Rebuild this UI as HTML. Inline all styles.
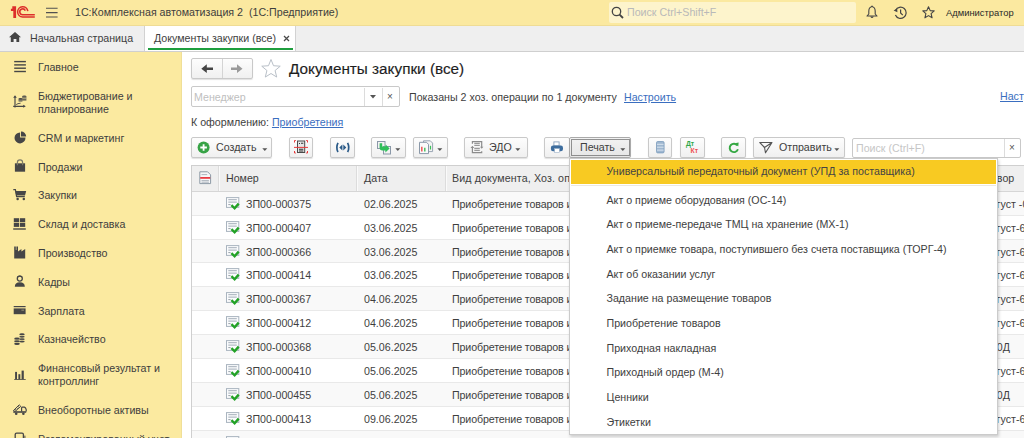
<!DOCTYPE html><html><head><meta charset="utf-8"><style>
*{box-sizing:border-box;margin:0;padding:0}
html,body{width:1024px;height:438px;overflow:hidden;background:#fff}
body{font-family:"Liberation Sans",sans-serif;font-size:10.67px;color:#3e3e3e;position:relative}
.a{position:absolute;white-space:nowrap}
.t{position:absolute;white-space:nowrap;line-height:13px}
#top{left:0;top:0;width:1024px;height:26px;background:#fbe9a0;border-bottom:1px solid #efdc95}
#tabs{left:0;top:26px;width:1024px;height:26px;background:#efefef;border-bottom:1px solid #cfcfcf}
#side{left:0;top:52px;width:182px;height:386px;background:#fbeaa0;border-right:1px solid #f0df98}
#sideb{left:181px;top:52px;width:0px;height:386px;background:#e4e4e4}
.btn{position:absolute;height:21px;border:1px solid #c9c9c9;border-radius:2px;background:linear-gradient(#fdfdfd,#f0f0f0);box-shadow:0 1px 1px rgba(0,0,0,.12)}
.lnk{color:#3a6ec0;text-decoration:underline}
.hl{position:absolute;top:166px;height:25px;background:#f0f0f0;border-bottom:1px solid #dcdcdc}
.rl{position:absolute;left:192px;width:832px;height:1px;background:#e9e9e9}
svg{position:absolute;overflow:visible}
</style></head><body>
<div id="top" class="a"></div><div id="tabs" class="a"></div><div id="side" class="a"></div><div id="sideb" class="a"></div>
<svg style="left:0;top:0" width="40" height="25" viewBox="0 0 40 25">
<path d="M12.3 6.2 H16.1 V17.9 H13.3 V10.9 H10.9 V8.7 H12.3Z" fill="#dd2f2a"/>
<g fill="none" stroke="#dd2f2a" stroke-width="1.55">
<path d="M27.8 11.2 A5.1 5.1 0 1 0 22.6 16.95 H34.8"/>
<path d="M25.3 10.6 A2.9 2.9 0 1 0 22.9 14.7 H34.8"/>
</g></svg>
<svg style="left:46px;top:7px" width="12" height="11" viewBox="0 0 12 11"><g stroke="#505050" stroke-width="1.1"><path d="M0 1.3H11.6M0 5.6H11.6M0 10H11.6"/></g></svg>
<div class="t" style="left:75px;top:6px;color:#3e3e3e">1С:Комплексная автоматизация 2&nbsp; (1С:Предприятие)</div>
<div class="a" style="left:609px;top:2px;width:247px;height:21px;background:#fdf4cc;border-radius:2px"></div>
<svg style="left:611px;top:6px" width="13" height="13" viewBox="0 0 13 13"><circle cx="5.5" cy="5.5" r="4.2" fill="none" stroke="#444" stroke-width="1.3"/><path d="M8.6 8.6 L12 12" stroke="#444" stroke-width="1.8"/></svg>
<div class="t" style="left:627px;top:6px;color:#b9b9b9">Поиск Ctrl+Shift+F</div>
<svg style="left:866px;top:5px" width="12" height="14" viewBox="0 0 12 14"><path d="M6 1 L6.6 1.8 C8.6 2.4 9.2 4.2 9.2 6.4 V9 L11 11 H1 L2.8 9 V6.4 C2.8 4.2 3.4 2.4 5.4 1.8Z" fill="none" stroke="#444" stroke-width="1.1" stroke-linejoin="round"/><path d="M4.2 11.4 Q6 14.8 7.8 11.4Z" fill="#444"/></svg>
<svg style="left:893px;top:6px" width="15" height="14" viewBox="0 0 15 14"><path d="M2.6 4.2 A5.6 5.6 0 1 1 2.4 9" fill="none" stroke="#444" stroke-width="1.2"/><path d="M0.6 4.6 L4.2 2.6 L4.4 6.2Z" fill="#444"/><path d="M7.6 3.4 V6.9 L9.8 9.1" fill="none" stroke="#444" stroke-width="1.2"/></svg>
<svg style="left:922px;top:6px" width="13" height="13" viewBox="0 0 13 13"><path d="M6.5 0.8 L8.2 4.6 L12.2 4.9 L9.1 7.6 L10.1 11.8 L6.5 9.6 L2.9 11.8 L3.9 7.6 L0.8 4.9 L4.8 4.6Z" fill="none" stroke="#444" stroke-width="1.1" stroke-linejoin="round"/></svg>
<div class="t" style="left:946px;top:6px;font-size:9.4px;color:#2a2a2a">Администратор</div>
<svg style="left:9px;top:32px" width="12" height="10" viewBox="0 0 12 10"><path d="M6 0 L12 5.2 H10.2 V10 H7.4 V7 H4.6 V10 H1.8 V5.2 H0Z" fill="#444"/></svg>
<div class="t" style="left:30px;top:32px;color:#3e3e3e">Начальная страница</div>
<div class="a" style="left:144px;top:26px;width:1px;height:25px;background:#d2d2d2"></div>
<div class="a" style="left:145px;top:26px;width:151px;height:25px;background:#fff;border-right:1px solid #d2d2d2"></div>
<div class="a" style="left:148px;top:48px;width:145px;height:2px;background:#1e9e3e"></div>
<div class="t" style="left:154px;top:32px;color:#3e3e3e">Документы закупки (все)</div>
<svg style="left:283px;top:35px" width="7" height="7" viewBox="0 0 7 7"><path d="M1 1L6 6M6 1L1 6" stroke="#4a4a4a" stroke-width="1.25"/></svg>
<div class="t" style="left:38px;top:61.3px;color:#3e3e3e">Главное</div>
<div class="t" style="left:38px;top:90px;color:#3e3e3e">Бюджетирование и<br>планирование</div>
<div class="t" style="left:38px;top:131.5px;color:#3e3e3e">CRM и маркетинг</div>
<div class="t" style="left:38px;top:160.6px;color:#3e3e3e">Продажи</div>
<div class="t" style="left:38px;top:189.4px;color:#3e3e3e">Закупки</div>
<div class="t" style="left:38px;top:218.2px;color:#3e3e3e">Склад и доставка</div>
<div class="t" style="left:38px;top:247px;color:#3e3e3e">Производство</div>
<div class="t" style="left:38px;top:275.8px;color:#3e3e3e">Кадры</div>
<div class="t" style="left:38px;top:304.6px;color:#3e3e3e">Зарплата</div>
<div class="t" style="left:38px;top:333.4px;color:#3e3e3e">Казначейство</div>
<div class="t" style="left:38px;top:362.2px;color:#3e3e3e">Финансовый результат и<br>контроллинг</div>
<div class="t" style="left:38px;top:404px;color:#3e3e3e">Внеоборотные активы</div>
<div class="t" style="left:38px;top:432.8px;color:#3e3e3e">Регламентированный учет</div>
<svg style="left:0;top:0" width="40" height="438" viewBox="0 0 40 438">
<g fill="#464646" stroke="none">
<!-- main -->
<rect x="14.2" y="60.9" width="11.7" height="1.4"/><rect x="14.2" y="64.2" width="11.7" height="1.4"/><rect x="14.2" y="67.5" width="11.7" height="1.4"/><rect x="14.2" y="70.8" width="11.7" height="1.4"/>
<!-- budget -->
<path d="M15 96.8V107.6M13.2 106.3H24.4" stroke="#464646" stroke-width="1.15" fill="none"/>
<path d="M13.2 97.8 L15 95.3 L16.8 97.8Z M23.2 104.8 L25.8 106.3 L23.2 107.8Z"/>
<path d="M16.2 104.6 Q17.6 103.4 20.6 103.2" stroke="#464646" stroke-width="0.9" fill="none"/>
<ellipse cx="24.3" cy="96.3" rx="2.1" ry="0.9"/>
<rect x="22.2" y="96.3" width="4.2" height="4.3" fill="#6a6858"/>
<path d="M22.2 98.2H26.4" stroke="#f2e4a0" stroke-width="0.6"/>
<ellipse cx="20.5" cy="98.7" rx="1.9" ry="0.8"/>
<rect x="18.6" y="98.7" width="3.8" height="2.8"/>
<path d="M18.6 100.2H22.4" stroke="#c8bf90" stroke-width="0.6"/>
<!-- crm -->
<path d="M20.1 132.4 V137.6 H25.5 A5.5 5.5 0 1 1 20.1 132.4Z"/>
<path d="M21 131.6 A5 5 0 0 1 26.2 136.6 H21Z"/>
<!-- sales bag -->
<rect x="14.9" y="163.3" width="10.2" height="8.4"/>
<path d="M17.4 165.2 V162.4 A2.6 2.6 0 0 1 22.6 162.4 V165.2" stroke="#7c7a68" stroke-width="1.2" fill="none"/>
<!-- purchases cart -->
<path d="M13.3 189.6 H15.4 L16.6 196.6 H24.8" stroke="#464646" stroke-width="1.2" fill="none"/>
<path d="M15.2 191 H26.2 L25 195.6 H16.2Z"/>
<circle cx="17.6" cy="198.9" r="1.25"/><circle cx="23.8" cy="198.9" r="1.25"/>
<!-- warehouse -->
<rect x="13.8" y="218.2" width="5.3" height="4"/><rect x="19.9" y="218.2" width="5.3" height="4"/>
<rect x="13.8" y="222.9" width="5.3" height="4"/><rect x="19.9" y="222.9" width="5.3" height="4"/>
<rect x="13.2" y="228.3" width="12.6" height="1.4"/>
<!-- production -->
<path d="M14.2 258.4 V246.6 H15.8 V250 H16.4 V246.6 H18 V251.6 L21.4 248.9 V251.6 L25.2 248.9 V258.4Z"/>
<!-- hr -->
<circle cx="19.8" cy="278.6" r="2.5" fill="none" stroke="#464646" stroke-width="1.3"/>
<path d="M17.3 277.6 Q19.8 275.2 22.3 277.6 V276.4 Q19.8 274.6 17.3 276.4Z"/>
<path d="M14.8 286.8 Q14.8 282.3 19.8 282.3 Q24.8 282.3 24.8 286.8Z"/>
<!-- salary card -->
<rect x="13.7" y="306" width="11.9" height="1.2"/>
<rect x="13.7" y="308.4" width="11.9" height="5.8"/>
<rect x="21.4" y="309.6" width="2.6" height="1.2" fill="#8a8570"/>
<!-- treasury coins -->
<g>
<ellipse cx="17" cy="338.8" rx="2.8" ry="1.2"/><ellipse cx="17" cy="341.2" rx="2.8" ry="1.2"/><ellipse cx="17" cy="343.8" rx="2.8" ry="1.3"/>
<ellipse cx="22" cy="334.4" rx="2.7" ry="1.1"/><ellipse cx="22" cy="336.8" rx="2.7" ry="1.1"/><ellipse cx="22" cy="339.2" rx="2.7" ry="1.1"/><ellipse cx="22" cy="341.4" rx="2.7" ry="1"/>
</g>
<path d="M14.6 340 H19.4 M14.6 342.5 H19.4 M19.6 335.6 H24.6 M19.6 338 H24.6 M19.6 340.3 H24.6" stroke="#f5e59a" stroke-width="0.6"/>
<!-- finance bars -->
<rect x="15.1" y="371.9" width="1.9" height="7.4"/><rect x="18.4" y="374.2" width="1.9" height="5.1"/><rect x="21.6" y="370.6" width="2.2" height="8.7"/>
<rect x="14.2" y="379.1" width="11.5" height="0.8"/>
<!-- fixed assets truck -->
<path d="M13.4 410.6 L19.2 404.8 L20.8 406.4 L15 411.4Z" fill="none" stroke="#464646" stroke-width="1"/>
<path d="M15.2 409.2 L16.4 410.2 M16.6 407.8 L17.8 408.8 M18 406.4 L19.2 407.4" stroke="#464646" stroke-width="0.8"/>
<path d="M21.6 411.6 V407.9 Q21.6 407.2 22.4 407.2 H24.4 Q25.8 407.6 26.2 409.6 V411.6" fill="none" stroke="#464646" stroke-width="1.2"/>
<rect x="13.3" y="411.2" width="12.9" height="1.6"/>
<circle cx="16.2" cy="413.8" r="1.3"/><circle cx="23.4" cy="413.8" r="1.3"/>
<!-- reg -->
<path d="M15.2 438 V434.6 Q15.2 433.2 16.6 433.2 H22 Q23.4 433.2 23.4 434.6 V438" fill="none" stroke="#464646" stroke-width="1.3"/>
<rect x="24.4" y="435.6" width="1" height="3"/>
</g></svg>
<div class="btn" style="left:191px;top:58px;width:62px;height:21px"></div>
<div class="a" style="left:222px;top:59px;width:1px;height:19px;background:#d4d4d4"></div>
<svg style="left:191px;top:58px" width="62" height="21" viewBox="0 0 62 21"><path d="M10.3 10.7 L15.8 6.3 V9.4 H22 V12 H15.8 V15.1Z" fill="#444"/><path d="M51.5 10.7 L46 6.3 V9.4 H40 V12 H46 V15.1Z" fill="#9a9a9a"/></svg>
<svg style="left:261px;top:59px" width="21" height="19" viewBox="0 0 21 19"><path d="M10.00 0.50 L12.53 6.72 L19.23 7.20 L14.09 11.53 L15.70 18.05 L10.00 14.50 L4.30 18.05 L5.91 11.53 L0.77 7.20 L7.47 6.72Z" fill="none" stroke="#b9c0c8" stroke-width="1" stroke-linejoin="round"/></svg>
<div class="t" style="left:289px;top:60px;font-size:15.3px;line-height:18px;color:#1e1e1e;-webkit-text-stroke:0.15px #1e1e1e">Документы закупки (все)</div>
<div class="a" style="left:191px;top:86px;width:209px;height:21px;border:1px solid #c9c9c9;border-radius:2px;background:#fff"></div>
<div class="a" style="left:364px;top:88px;width:1px;height:18px;background:#dcdcdc"></div>
<div class="a" style="left:382px;top:88px;width:1px;height:18px;background:#dcdcdc"></div>
<div class="t" style="left:194px;top:91px;color:#c0c0c0">Менеджер</div>
<svg style="left:370px;top:95px" width="6" height="4" viewBox="0 0 6 4"><path d="M0 0H6L3 3.5Z" fill="#555"/></svg>
<div class="t" style="left:387px;top:90px;color:#555;font-size:10px">×</div>
<div class="t" style="left:409px;top:91px;color:#3e3e3e">Показаны 2 хоз. операции по 1 документу</div>
<div class="t lnk" style="left:624px;top:91px">Настроить</div>
<div class="t lnk" style="left:1000px;top:90px">Настроить</div>
<div class="t" style="left:191px;top:116px;color:#3e3e3e">К оформлению: <span class="lnk">Приобретения</span></div>
<div class="btn" style="left:191px;top:137px;width:81px;height:21px"></div>
<svg style="left:197px;top:141px" width="13" height="13" viewBox="0 0 13 13"><circle cx="6.6" cy="6.5" r="6" fill="#37a346"/><path d="M6.6 3.2V9.8M3.3 6.5H9.9" stroke="#fff" stroke-width="1.8"/></svg>
<div class="t" style="left:216px;top:141px">Создать</div>
<svg style="left:262px;top:147.5px" width="6" height="4" viewBox="0 0 6 4"><path d="M0.3 0.3H5.3L2.8 3Z" fill="#555"/></svg>
<div class="btn" style="left:289px;top:137px;width:24px;height:21px"></div>
<svg style="left:294px;top:140px" width="14" height="14" viewBox="0 0 14 14"><rect x="3.5" y="1" width="7.2" height="11.5" fill="#e6e6e6" stroke="#4a4a4a" stroke-width="1"/><path d="M5 3.5H6M7 3.3H9.3M5 9.2H9.3M5 11H9.3" stroke="#333" stroke-width="1.1"/><g fill="none" stroke="#e8383a" stroke-width="1"><path d="M0.5 2.5V0.5H1.8M12.2 0.5H13.5V2.5M13.5 11V13H12.2M1.8 13H0.5V11"/></g><path d="M0 7.4H14" stroke="#e8383a" stroke-width="1"/></svg>
<div class="btn" style="left:330px;top:137px;width:25px;height:21px"></div>
<svg style="left:335px;top:141px" width="16" height="13" viewBox="0 0 16 13"><g fill="none" stroke="#2a5a88" stroke-width="1.7"><path d="M3 1.8 Q0.6 6.4 3 11"/><path d="M12.6 1.8 Q15 6.4 12.6 11"/></g><path d="M4.3 6.4 L7.4 3.4 V9.4Z M11.3 6.4 L8.3 3.4 V9.4Z" fill="#2a5a88"/></svg>
<div class="btn" style="left:371px;top:137px;width:35px;height:21px"></div>
<svg style="left:376px;top:140px" width="16" height="16" viewBox="0 0 16 16"><rect x="1.5" y="1.5" width="7.5" height="7" fill="#f2f2f2" stroke="#8a98a8"/><rect x="7.5" y="6.5" width="7" height="7.5" fill="#f2f2f2" stroke="#8a98a8"/><path d="M3.6 3.2 H6.2 V6.6 L9.6 6.6 V4.6 L13.6 8.6 L9.4 12.6 V10.4 H6 Q3.6 10.4 3.6 8Z" fill="#2fbf5a"/></svg>
<svg style="left:395px;top:147.5px" width="6" height="4" viewBox="0 0 6 4"><path d="M0.3 0.3H5.3L2.8 3Z" fill="#555"/></svg>
<div class="btn" style="left:413px;top:137px;width:35px;height:21px"></div>
<svg style="left:418px;top:140px" width="16" height="16" viewBox="0 0 16 16"><path d="M5.5 0.8 H12.3 L14.6 3.1 V11.6 H5.5Z" fill="#f4f4f4" stroke="#9aa6b4"/><path d="M1.5 2.3 H8.5 L10.5 4.3 V13.6 H1.5Z" fill="#fafafa" stroke="#8a98a8"/><path d="M3.8 11.6V6.8" stroke="#ef6060" stroke-width="1.6"/><path d="M6.8 11.6V7.8" stroke="#3cbf58" stroke-width="1.4"/><path d="M12.5 9.5V5.8" stroke="#3cbf58" stroke-width="1.2"/></svg>
<svg style="left:437px;top:147.5px" width="6" height="4" viewBox="0 0 6 4"><path d="M0.3 0.3H5.3L2.8 3Z" fill="#555"/></svg>
<div class="btn" style="left:464px;top:137px;width:64px;height:21px"></div>
<svg style="left:466px;top:138px" width="20" height="18" viewBox="0 0 20 18"><g fill="none" stroke="#8c8c8c" stroke-width="1.2"><path d="M6.4 5.8 V3.7 H15.7 V9"/><path d="M6.4 9.6 V14.6 H15.7 V13.2"/><path d="M8.3 5.3H13.8M8.3 7.3H13.8M8.3 10.3H13.8M8.3 12.3H13.8" stroke="#9a9a9a"/></g><path d="M14 8.8 H17.4 L15.7 10.8Z M4.5 9.9 H8.3 L6.4 7.8Z" fill="#8c8c8c"/></svg>
<div class="t" style="left:489px;top:141px">ЭДО</div>
<svg style="left:515px;top:147.5px" width="6" height="4" viewBox="0 0 6 4"><path d="M0.3 0.3H5.3L2.8 3Z" fill="#555"/></svg>
<div class="btn" style="left:544px;top:137px;width:26px;height:21px"></div>
<svg style="left:550px;top:141px" width="14" height="12" viewBox="0 0 14 12"><rect x="3.9" y="0.9" width="5.2" height="4" fill="#fff" stroke="#8aa2bc" stroke-width="0.9"/><rect x="0.9" y="4.5" width="12.1" height="5.8" rx="2.2" fill="#3d6d9e"/><rect x="4.6" y="7.6" width="4.8" height="3.9" fill="#fff" stroke="#9ab0c6" stroke-width="0.6"/></svg>
<div class="btn" style="left:569px;top:137px;width:62px;height:21px;background:linear-gradient(#f2f2f2,#e6e6e6);border-color:#aaa"></div>
<svg style="left:571px;top:139px" width="59" height="17" viewBox="0 0 59 17"><rect x="0.5" y="0.5" width="58" height="16" fill="none" stroke="#333" stroke-width="1" stroke-dasharray="1 1"/></svg>
<div class="t" style="left:580px;top:141px">Печать</div>
<svg style="left:620px;top:147.5px" width="6" height="4" viewBox="0 0 6 4"><path d="M0.3 0.3H5.3L2.8 3Z" fill="#555"/></svg>
<div class="btn" style="left:648px;top:137px;width:24px;height:21px"></div>
<svg style="left:656px;top:141px" width="9" height="13" viewBox="0 0 9 13"><rect x="0.5" y="0.5" width="7.6" height="11.4" rx="1.2" fill="#9fb7d0" stroke="#7b9cbc" stroke-width="0.8"/><path d="M1 3.3H7.6M1 6.2H7.6M1 9.1H7.6" stroke="#dfe9f3" stroke-width="0.9"/></svg>
<div class="btn" style="left:680px;top:137px;width:25px;height:21px"></div>
<div class="a" style="left:686px;top:140px;font-size:6.8px;line-height:8px;font-weight:bold;color:#2ea84a">Дт</div>
<div class="a" style="left:690.5px;top:146.5px;font-size:6.8px;line-height:8px;font-weight:bold;color:#ee4e50">Кт</div>
<div class="btn" style="left:721px;top:137px;width:25px;height:21px"></div>
<svg style="left:728px;top:142px" width="12" height="12" viewBox="0 0 12 12"><path d="M9.4 3.6 A4.2 4.2 0 1 0 9.9 7.2" fill="none" stroke="#35a843" stroke-width="1.9"/><path d="M6.9 1.2 L10.6 0.6 L10.3 4.6Z" fill="#35a843"/></svg>
<div class="btn" style="left:753px;top:137px;width:92px;height:21px"></div>
<svg style="left:759px;top:141px" width="14" height="13" viewBox="0 0 14 13"><path d="M0.8 1.5 L13 1.5 L6.5 11.8 L5.5 6.5Z M5.5 6.5 L13 1.5" fill="none" stroke="#555" stroke-width="1.1" stroke-linejoin="round"/></svg>
<div class="t" style="left:779px;top:141px">Отправить</div>
<svg style="left:834px;top:147.5px" width="6" height="4" viewBox="0 0 6 4"><path d="M0.3 0.3H5.3L2.8 3Z" fill="#555"/></svg>
<div class="a" style="left:852px;top:138px;width:169px;height:20px;border:1px solid #c9c9c9;border-radius:2px;background:#fff"></div>
<div class="a" style="left:1004px;top:139px;width:1px;height:18px;background:#dcdcdc"></div>
<div class="t" style="left:856px;top:142px;color:#c6c6c6">Поиск (Ctrl+F)</div>
<div class="t" style="left:1009px;top:141px;color:#555;font-size:10px">×</div>
<div class="a" style="left:191px;top:165px;width:833px;height:290px;border:1px solid #cfcfcf;border-right:none;background:#fff"></div>
<div class="a" style="left:192px;top:166px;width:832px;height:26px;background:#efefef;border-bottom:1px solid #d6d6d6"></div>
<div class="a" style="left:218px;top:166px;width:1px;height:25px;background:#dcdcdc"></div><div class="a" style="left:219px;top:166px;width:1px;height:25px;background:#fafafa"></div>
<div class="a" style="left:356px;top:166px;width:1px;height:25px;background:#dcdcdc"></div><div class="a" style="left:357px;top:166px;width:1px;height:25px;background:#fafafa"></div>
<div class="a" style="left:445px;top:166px;width:1px;height:25px;background:#dcdcdc"></div><div class="a" style="left:446px;top:166px;width:1px;height:25px;background:#fafafa"></div>
<svg style="left:199px;top:171px" width="13" height="14" viewBox="0 0 13 14"><path d="M0.8 0.8H8.6L11.6 3.8V12.6H0.8Z" fill="#f6f7f8" stroke="#8d9aa6"/><path d="M2.5 3.6H8.2M2.5 9.6H9.9M2.5 11.2H9.9" stroke="#a5aeb8" stroke-width="0.9"/><path d="M1.2 6.9H11.2" stroke="#e8323a" stroke-width="1.7"/></svg>
<div class="t" style="left:226px;top:172px">Номер</div>
<div class="t" style="left:364px;top:172px">Дата</div>
<div class="t" style="left:452px;top:172px;letter-spacing:0.12px">Вид документа, Хоз. операция</div>
<div class="t" style="left:974px;top:172px">Договор</div>
<div class="a" style="left:192px;top:192px;width:832px;height:23px;background:#f9f9f9"></div>
<div class="rl" style="top:215px"></div>
<svg style="left:226px;top:197px" width="15" height="14" viewBox="0 0 15 14"><rect x="0.5" y="0.6" width="12.3" height="9.8" fill="#fbfcfd" stroke="#a9b4bf"/><path d="M2.3 2.6H10.8M2.3 5.1H10.8" stroke="#b4bcc5" stroke-width="1.1"/><path d="M2.3 7.6H4.6" stroke="#8c96a0" stroke-width="0.9"/><path d="M5.4 8.2 L8.6 11.3 L12.7 6.6" fill="none" stroke="#22a226" stroke-width="2.4"/></svg>
<div class="t" style="left:246px;top:198px">ЗП00-000375</div>
<div class="t" style="left:364px;top:198px">02.06.2025</div>
<div class="t" style="left:452px;top:198px;letter-spacing:-0.13px">Приобретение товаров и услуг</div>
<div class="t" style="left:985px;top:198px">август -0</div>
<div class="rl" style="top:239px"></div>
<svg style="left:226px;top:221px" width="15" height="14" viewBox="0 0 15 14"><rect x="0.5" y="0.6" width="12.3" height="9.8" fill="#fbfcfd" stroke="#a9b4bf"/><path d="M2.3 2.6H10.8M2.3 5.1H10.8" stroke="#b4bcc5" stroke-width="1.1"/><path d="M2.3 7.6H4.6" stroke="#8c96a0" stroke-width="0.9"/><path d="M5.4 8.2 L8.6 11.3 L12.7 6.6" fill="none" stroke="#22a226" stroke-width="2.4"/></svg>
<div class="t" style="left:246px;top:222px">ЗП00-000407</div>
<div class="t" style="left:364px;top:222px">03.06.2025</div>
<div class="t" style="left:452px;top:222px;letter-spacing:-0.13px">Приобретение товаров и услуг</div>
<div class="t" style="left:985px;top:222px">август-6</div>
<div class="a" style="left:192px;top:240px;width:832px;height:22px;background:#f9f9f9"></div>
<div class="rl" style="top:262px"></div>
<svg style="left:226px;top:245px" width="15" height="14" viewBox="0 0 15 14"><rect x="0.5" y="0.6" width="12.3" height="9.8" fill="#fbfcfd" stroke="#a9b4bf"/><path d="M2.3 2.6H10.8M2.3 5.1H10.8" stroke="#b4bcc5" stroke-width="1.1"/><path d="M2.3 7.6H4.6" stroke="#8c96a0" stroke-width="0.9"/><path d="M5.4 8.2 L8.6 11.3 L12.7 6.6" fill="none" stroke="#22a226" stroke-width="2.4"/></svg>
<div class="t" style="left:246px;top:246px">ЗП00-000366</div>
<div class="t" style="left:364px;top:246px">03.06.2025</div>
<div class="t" style="left:452px;top:246px;letter-spacing:-0.13px">Приобретение товаров и услуг</div>
<div class="t" style="left:985px;top:246px">август-6</div>
<div class="rl" style="top:286px"></div>
<svg style="left:226px;top:268px" width="15" height="14" viewBox="0 0 15 14"><rect x="0.5" y="0.6" width="12.3" height="9.8" fill="#fbfcfd" stroke="#a9b4bf"/><path d="M2.3 2.6H10.8M2.3 5.1H10.8" stroke="#b4bcc5" stroke-width="1.1"/><path d="M2.3 7.6H4.6" stroke="#8c96a0" stroke-width="0.9"/><path d="M5.4 8.2 L8.6 11.3 L12.7 6.6" fill="none" stroke="#22a226" stroke-width="2.4"/></svg>
<div class="t" style="left:246px;top:269px">ЗП00-000414</div>
<div class="t" style="left:364px;top:269px">03.06.2025</div>
<div class="t" style="left:452px;top:269px;letter-spacing:-0.13px">Приобретение товаров и услуг</div>
<div class="t" style="left:985px;top:269px">август-6</div>
<div class="a" style="left:192px;top:287px;width:832px;height:23px;background:#f9f9f9"></div>
<div class="rl" style="top:310px"></div>
<svg style="left:226px;top:292px" width="15" height="14" viewBox="0 0 15 14"><rect x="0.5" y="0.6" width="12.3" height="9.8" fill="#fbfcfd" stroke="#a9b4bf"/><path d="M2.3 2.6H10.8M2.3 5.1H10.8" stroke="#b4bcc5" stroke-width="1.1"/><path d="M2.3 7.6H4.6" stroke="#8c96a0" stroke-width="0.9"/><path d="M5.4 8.2 L8.6 11.3 L12.7 6.6" fill="none" stroke="#22a226" stroke-width="2.4"/></svg>
<div class="t" style="left:246px;top:293px">ЗП00-000367</div>
<div class="t" style="left:364px;top:293px">04.06.2025</div>
<div class="t" style="left:452px;top:293px;letter-spacing:-0.13px">Приобретение товаров и услуг</div>
<div class="t" style="left:985px;top:293px">август-6</div>
<div class="rl" style="top:334px"></div>
<svg style="left:226px;top:316px" width="15" height="14" viewBox="0 0 15 14"><rect x="0.5" y="0.6" width="12.3" height="9.8" fill="#fbfcfd" stroke="#a9b4bf"/><path d="M2.3 2.6H10.8M2.3 5.1H10.8" stroke="#b4bcc5" stroke-width="1.1"/><path d="M2.3 7.6H4.6" stroke="#8c96a0" stroke-width="0.9"/><path d="M5.4 8.2 L8.6 11.3 L12.7 6.6" fill="none" stroke="#22a226" stroke-width="2.4"/></svg>
<div class="t" style="left:246px;top:317px">ЗП00-000412</div>
<div class="t" style="left:364px;top:317px">04.06.2025</div>
<div class="t" style="left:452px;top:317px;letter-spacing:-0.13px">Приобретение товаров и услуг</div>
<div class="t" style="left:985px;top:317px">август-6</div>
<div class="a" style="left:192px;top:335px;width:832px;height:23px;background:#f9f9f9"></div>
<div class="rl" style="top:358px"></div>
<svg style="left:226px;top:340px" width="15" height="14" viewBox="0 0 15 14"><rect x="0.5" y="0.6" width="12.3" height="9.8" fill="#fbfcfd" stroke="#a9b4bf"/><path d="M2.3 2.6H10.8M2.3 5.1H10.8" stroke="#b4bcc5" stroke-width="1.1"/><path d="M2.3 7.6H4.6" stroke="#8c96a0" stroke-width="0.9"/><path d="M5.4 8.2 L8.6 11.3 L12.7 6.6" fill="none" stroke="#22a226" stroke-width="2.4"/></svg>
<div class="t" style="left:246px;top:341px">ЗП00-000368</div>
<div class="t" style="left:364px;top:341px">05.06.2025</div>
<div class="t" style="left:452px;top:341px;letter-spacing:-0.13px">Приобретение товаров и услуг</div>
<div class="t" style="left:985px;top:341px">000Д</div>
<div class="rl" style="top:382px"></div>
<svg style="left:226px;top:364px" width="15" height="14" viewBox="0 0 15 14"><rect x="0.5" y="0.6" width="12.3" height="9.8" fill="#fbfcfd" stroke="#a9b4bf"/><path d="M2.3 2.6H10.8M2.3 5.1H10.8" stroke="#b4bcc5" stroke-width="1.1"/><path d="M2.3 7.6H4.6" stroke="#8c96a0" stroke-width="0.9"/><path d="M5.4 8.2 L8.6 11.3 L12.7 6.6" fill="none" stroke="#22a226" stroke-width="2.4"/></svg>
<div class="t" style="left:246px;top:365px">ЗП00-000410</div>
<div class="t" style="left:364px;top:365px">05.06.2025</div>
<div class="t" style="left:452px;top:365px;letter-spacing:-0.13px">Приобретение товаров и услуг</div>
<div class="t" style="left:985px;top:365px">август-6</div>
<div class="a" style="left:192px;top:383px;width:832px;height:23px;background:#f9f9f9"></div>
<div class="rl" style="top:406px"></div>
<svg style="left:226px;top:388px" width="15" height="14" viewBox="0 0 15 14"><rect x="0.5" y="0.6" width="12.3" height="9.8" fill="#fbfcfd" stroke="#a9b4bf"/><path d="M2.3 2.6H10.8M2.3 5.1H10.8" stroke="#b4bcc5" stroke-width="1.1"/><path d="M2.3 7.6H4.6" stroke="#8c96a0" stroke-width="0.9"/><path d="M5.4 8.2 L8.6 11.3 L12.7 6.6" fill="none" stroke="#22a226" stroke-width="2.4"/></svg>
<div class="t" style="left:246px;top:389px">ЗП00-000455</div>
<div class="t" style="left:364px;top:389px">05.06.2025</div>
<div class="t" style="left:452px;top:389px;letter-spacing:-0.13px">Приобретение товаров и услуг</div>
<div class="t" style="left:985px;top:389px">000Д</div>
<div class="rl" style="top:430px"></div>
<svg style="left:226px;top:412px" width="15" height="14" viewBox="0 0 15 14"><rect x="0.5" y="0.6" width="12.3" height="9.8" fill="#fbfcfd" stroke="#a9b4bf"/><path d="M2.3 2.6H10.8M2.3 5.1H10.8" stroke="#b4bcc5" stroke-width="1.1"/><path d="M2.3 7.6H4.6" stroke="#8c96a0" stroke-width="0.9"/><path d="M5.4 8.2 L8.6 11.3 L12.7 6.6" fill="none" stroke="#22a226" stroke-width="2.4"/></svg>
<div class="t" style="left:246px;top:413px">ЗП00-000413</div>
<div class="t" style="left:364px;top:413px">09.06.2025</div>
<div class="t" style="left:452px;top:413px;letter-spacing:-0.13px">Приобретение товаров и услуг</div>
<div class="t" style="left:985px;top:413px">август-6</div>
<div class="a" style="left:192px;top:431px;width:832px;height:23px;background:#f9f9f9"></div>
<div class="rl" style="top:454px"></div>
<svg style="left:226px;top:436px" width="15" height="14" viewBox="0 0 15 14"><rect x="0.5" y="0.6" width="12.3" height="9.8" fill="#fbfcfd" stroke="#a9b4bf"/><path d="M2.3 2.6H10.8M2.3 5.1H10.8" stroke="#b4bcc5" stroke-width="1.1"/><path d="M2.3 7.6H4.6" stroke="#8c96a0" stroke-width="0.9"/><path d="M5.4 8.2 L8.6 11.3 L12.7 6.6" fill="none" stroke="#22a226" stroke-width="2.4"/></svg>
<div class="t" style="left:246px;top:437px">ЗП00-000411</div>
<div class="t" style="left:364px;top:437px">09.06.2025</div>
<div class="t" style="left:452px;top:437px;letter-spacing:-0.13px">Приобретение товаров и услуг</div>
<div class="t" style="left:985px;top:437px">август-6</div>
<div class="a" style="left:569px;top:158px;width:429px;height:277px;background:#fff;border:1px solid #cbcbcb;box-shadow:1px 2px 3px rgba(0,0,0,.18)"></div>
<div class="a" style="left:571px;top:160px;width:425px;height:24px;background:#f8ca22"></div>
<div class="a" style="left:571px;top:185px;width:425px;height:1px;background:#ece9e0"></div>
<div class="t" style="left:606.5px;top:165px;color:#444">Универсальный передаточный документ (УПД за поставщика)</div>
<div class="t" style="left:606.5px;top:193.5px">Акт о приеме оборудования (ОС-14)</div>
<div class="t" style="left:606.5px;top:218.2px">Акт о приеме-передаче ТМЦ на хранение (МХ-1)</div>
<div class="t" style="left:606.5px;top:242.8px">Акт о приемке товара, поступившего без счета поставщика (ТОРГ-4)</div>
<div class="t" style="left:606.5px;top:267.5px">Акт об оказании услуг</div>
<div class="t" style="left:606.5px;top:292.2px">Задание на размещение товаров</div>
<div class="t" style="left:606.5px;top:316.9px">Приобретение товаров</div>
<div class="t" style="left:606.5px;top:341.5px">Приходная накладная</div>
<div class="t" style="left:606.5px;top:366.2px">Приходный ордер (М-4)</div>
<div class="t" style="left:606.5px;top:390.9px">Ценники</div>
<div class="t" style="left:606.5px;top:415.5px">Этикетки</div>
</body></html>
